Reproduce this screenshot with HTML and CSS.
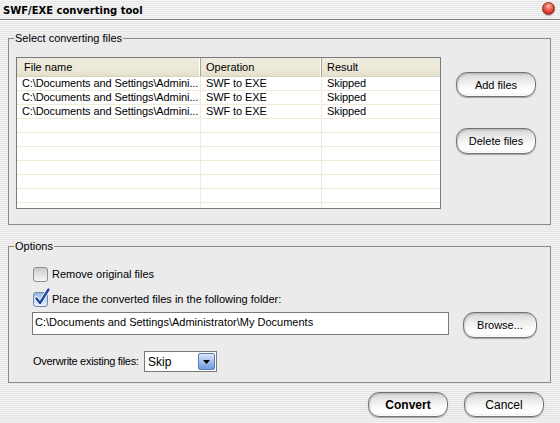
FILE: index.html
```html
<!DOCTYPE html>
<html>
<head>
<meta charset="utf-8">
<link rel="stylesheet" href="styles.css">
</head>
<body>
<div class="window">
  <div class="titlebar">
    <span class="title">SWF/EXE converting tool</span>
    <span class="close"></span>
  </div>
  <div class="content">
    <fieldset class="group">
      <legend>Select converting files</legend>
      <div class="files-row">
        <div class="list">
          <div class="list-head">
            <div class="hcell">File name</div>
            <div class="hcell">Operation</div>
            <div class="hcell last">Result</div>
          </div>
          <div class="list-body">
            <div class="row"><div class="cell">C:\Documents and Settings\Admini...</div><div class="cell">SWF to EXE</div><div class="cell last">Skipped</div></div>
            <div class="row"><div class="cell">C:\Documents and Settings\Admini...</div><div class="cell">SWF to EXE</div><div class="cell last">Skipped</div></div>
            <div class="row"><div class="cell">C:\Documents and Settings\Admini...</div><div class="cell">SWF to EXE</div><div class="cell last">Skipped</div></div>
            <div class="row"><div class="cell"></div><div class="cell"></div><div class="cell last"></div></div>
            <div class="row"><div class="cell"></div><div class="cell"></div><div class="cell last"></div></div>
            <div class="row"><div class="cell"></div><div class="cell"></div><div class="cell last"></div></div>
            <div class="row"><div class="cell"></div><div class="cell"></div><div class="cell last"></div></div>
            <div class="row"><div class="cell"></div><div class="cell"></div><div class="cell last"></div></div>
            <div class="row"><div class="cell"></div><div class="cell"></div><div class="cell last"></div></div>
            <div class="row"><div class="cell"></div><div class="cell"></div><div class="cell last"></div></div>
          </div>
        </div>
        <div class="side-buttons">
          <button class="btn add">Add files</button>
          <button class="btn del">Delete files</button>
        </div>
      </div>
    </fieldset>

    <fieldset class="group options">
      <legend>Options</legend>
      <div class="opt-row first">
        <span class="check"></span>
        <span class="opt-label">Remove original files</span>
      </div>
      <div class="opt-row second">
        <span class="check checked">
          <svg class="tick" width="18" height="20" viewBox="0 0 18 20"><path d="M3.5 11.5 L7 16 L15.5 2.5" fill="none" stroke="#ffffff" stroke-width="4.2" stroke-linecap="round" stroke-linejoin="round"/><path d="M3.5 11.5 L7 16 L15.5 2.5" fill="none" stroke="#1c4aa0" stroke-width="2.4" stroke-linecap="round" stroke-linejoin="round"/></svg>
        </span>
        <span class="opt-label">Place the converted files in the following folder:</span>
      </div>
      <div class="folder-row">
        <div class="textbox">C:\Documents and Settings\Administrator\My Documents</div>
        <button class="btn browse">Browse...</button>
      </div>
      <div class="overwrite-row">
        <span class="opt-label plain">Overwrite existing files:</span>
        <div class="select">
          <span class="select-value">Skip</span>
          <span class="select-arrow"><svg width="7" height="4" viewBox="0 0 7 4"><path d="M0 0 H7 L3.5 4 Z" fill="#000"/></svg></span>
        </div>
      </div>
    </fieldset>

    <div class="footer">
      <button class="btn convert">Convert</button>
      <button class="btn cancel">Cancel</button>
    </div>
  </div>
</div>
</body>
</html>
```

FILE: styles.css
```css
* { box-sizing: border-box; }

html, body {
  margin: 0;
  padding: 0;
}

body {
  width: 560px;
  height: 423px;
  overflow: hidden;
  font-family: "Liberation Sans", Arial, sans-serif;
  font-size: 11px;
  color: #000;
}

.window {
  width: 560px;
  height: 423px;
  background: repeating-linear-gradient(to bottom, #f1f1f1 0, #f1f1f1 1px, #e6e6e6 1px, #e6e6e6 2px);
  display: flex;
  flex-direction: column;
}

.titlebar {
  height: 20px;
  border-bottom: 1px solid #7a7a7a;
  box-shadow: 0 1px 0 #ffffff;
  display: flex;
  justify-content: space-between;
  align-items: flex-start;
  padding: 0 5px 0 3px;
  background: repeating-linear-gradient(to bottom, #f4f4f4 0, #f4f4f4 1px, #e8e8e8 1px, #e8e8e8 2px);
}

.title {
  font-family: "DejaVu Sans", Verdana, sans-serif;
  font-weight: bold;
  font-size: 10px;
  line-height: 13px;
  margin-top: 4px;
  color: #000;
}

.close {
  width: 13px;
  height: 13px;
  margin-top: 2px;
  border-radius: 50%;
  border: 1px solid #8c2a22;
  background: radial-gradient(circle at 50% 30%, #ffc2b6 0, #f0695a 35%, #d8372a 65%, #a0170f 100%);
  box-shadow: 0 1px 1px rgba(0,0,0,0.25);
}

.content {
  padding: 12px 9px 0 8px;
  display: flex;
  flex-direction: column;
}

.group {
  margin: 0;
  padding: 0;
  min-width: 0;
  border: 1px solid #8a8a8a;
  background: #ebebeb;
}

.group.options {
  margin-top: 15px;
}

.group legend {
  margin-left: 5px;
  padding: 0 1px;
  font-size: 11px;
  line-height: 13px;
}

.files-row {
  display: flex;
  margin: 12px 0 15px 7px;
}

.list {
  width: 425px;
  height: 152px;
  border: 1px solid #7a7a7a;
  background: #fff;
  overflow: hidden;
}

.list-head {
  display: grid;
  grid-template-columns: 184px 121px 1fr;
  height: 19px;
  background: linear-gradient(to bottom, #efece0 0, #ebe8d6 70%, #e2dfcc 100%);
  border-bottom: 1px solid #d6d2c0;
}

.hcell {
  padding-left: 7px;
  line-height: 18px;
  border-right: 1px solid #a9a696;
  box-shadow: inset -1px 0 0 #ffffff;
}

.hcell + .hcell { padding-left: 5px; }

.hcell.last {
  border-right: none;
  box-shadow: none;
}

.list-body {
  display: flex;
  flex-direction: column;
}

.row {
  display: grid;
  grid-template-columns: 184px 121px 1fr;
  height: 14px;
  flex: none;
  border-bottom: 1px solid #efebd9;
}

.cell {
  padding-left: 5px;
  line-height: 13px;
  white-space: nowrap;
  overflow: hidden;
  border-right: 1px solid #efebd9;
  letter-spacing: -0.1px;
}

.cell.last { border-right: none; }

.side-buttons {
  display: flex;
  flex-direction: column;
  margin-left: 15px;
}

.btn {
  font-family: "Liberation Sans", Arial, sans-serif;
  font-size: 11px;
  color: #000;
  border: 1px solid #727272;
  border-radius: 11px;
  background: linear-gradient(to bottom, #d6d6d6 0%, #ececec 35%, #fbfbfb 65%, #ffffff 85%, #ececec 100%);
  box-shadow: inset 1px 1px 2px rgba(0,0,0,0.18), inset -1px -1px 1px rgba(255,255,255,0.9), 0 1px 1px rgba(0,0,0,0.3);
  padding: 0;
  cursor: default;
}

.btn.add {
  width: 80px;
  height: 25px;
  margin-top: 15px;
}

.btn.del {
  width: 80px;
  height: 26px;
  margin-top: 31px;
}

.options .opt-row {
  display: flex;
  align-items: center;
  height: 16px;
  margin-left: 24px;
}

.options .opt-row.first { margin-top: 13px; }
.options .opt-row.second { margin-top: 9px; }

.check {
  position: relative;
  width: 15px;
  height: 15px;
  border: 1px solid #8e8e8e;
  border-radius: 3px;
  background: linear-gradient(to bottom, #c9c9c9 0%, #dedede 40%, #f6f6f6 100%);
  margin-right: 4px;
  flex: none;
}

.check.checked {
  border-color: #6f88b2;
  background: linear-gradient(to bottom, #9ab6e0 0%, #c4d6f0 50%, #eaf1fb 100%);
}

.tick {
  position: absolute;
  left: -1px;
  top: -6px;
}

.opt-label {
  line-height: 13px;
  white-space: nowrap;
}

.folder-row {
  display: flex;
  align-items: flex-start;
  margin: 5px 0 0 23px;
}

.textbox {
  width: 417px;
  height: 23px;
  border: 1px solid #7a7a7a;
  background: #fff;
  padding-left: 2px;
  line-height: 19px;
  white-space: nowrap;
}

.btn.browse {
  width: 74px;
  height: 26px;
  margin-left: 14px;
}

.overwrite-row {
  display: flex;
  align-items: center;
  margin: 13px 0 10px 24px;
}

.opt-label.plain {
  width: 111px;
  letter-spacing: -0.3px;
}

.select {
  width: 73px;
  height: 21px;
  border: 1px solid #7a7a7a;
  background: #fff;
  display: flex;
  align-items: center;
  justify-content: space-between;
  padding: 0 1px 0 3px;
}

.select-value {
  font-size: 12px;
  line-height: 14px;
}

.select-arrow {
  width: 17px;
  height: 17px;
  border: 1px solid #5b7eb9;
  border-radius: 2px;
  background: linear-gradient(to bottom, #d9e6fa 0%, #a8c3ee 45%, #6f9ae0 100%);
  display: flex;
  align-items: center;
  justify-content: center;
}

.footer {
  display: flex;
  justify-content: flex-end;
  gap: 16px;
  padding-right: 7px;
  margin-top: 9px;
}

.btn.convert, .btn.cancel {
  width: 80px;
  height: 25px;
  font-size: 12px;
}

.btn.convert {
  font-weight: bold;
}
```
